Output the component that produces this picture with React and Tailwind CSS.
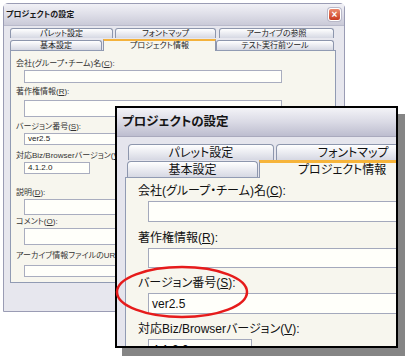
const jp = "font-['Liberation_Sans','Noto_Sans_CJK_JP',sans-serif] [font-feature-settings:'palt']"

function SmallTab({ children, className = '' }) {
  return (
    <div
      className={`flex items-center justify-center rounded-t-[3px] border border-b-0 border-[#8d96ad] bg-gradient-to-b from-white to-[#d6d8e3] text-[8px] leading-none text-[#222] ${className}`}
    >
      {children}
    </div>
  )
}

function BigTab({ children, className = '' }) {
  return (
    <div
      className={`flex shrink-0 items-center rounded-t-[4px] border border-b-0 border-[#8d96ad] bg-gradient-to-b from-white to-[#d6d8e3] text-[12px] leading-none text-[#111] ${className}`}
    >
      {children}
    </div>
  )
}

function Key({ k }) {
  return <span className="underline underline-offset-1">{k}</span>
}

const smallFields = [
  { label: '会社(グループ・チーム)名', k: 'C', lab: 'mt-[8px]', box: 'mt-[1px] h-[13px] w-[258px]' },
  { label: '著作権情報', k: 'R', lab: 'mt-[4px]', box: 'mt-[3px] h-[17px] w-[258px]' },
  { label: 'バージョン番号', k: 'S', lab: 'mt-[5px]', box: 'mt-[1px] h-[12px] w-[258px]', value: 'ver2.5' },
  { label: '対応Biz/Browserバージョン', k: 'V', lab: 'mt-[6px]', box: 'mt-[1px] h-[12px] w-[66px]', value: '4.1.2.0' },
  { label: '説明', k: 'D', lab: 'mt-[14px]', box: 'mt-[1px] h-[16px] w-[258px]' },
  { label: 'コメント', k: 'O', lab: 'mt-[2px]', box: 'mt-[1px] h-[17px] w-[258px]' },
  { label: 'アーカイブ情報ファイルのURL', k: 'U', lab: 'mt-[6px]', box: 'mt-[4px] h-[12px] w-[258px]' },
]

const bigFields = [
  { label: '会社(グループ・チーム)名', k: 'C', lab: 'mt-[6px]', box: 'mt-[3px] h-[21px] w-[300px]' },
  { label: '著作権情報', k: 'R', lab: 'mt-[9px]', box: 'mt-[3px] h-[20px] w-[300px]' },
  { label: 'バージョン番号', k: 'S', lab: 'mt-[8px]', box: 'mt-[3px] h-[21px] w-[300px]', value: 'ver2.5' },
  { label: '対応Biz/Browserバージョン', k: 'V', lab: 'mt-[8px]', box: 'mt-[3px] h-[21px] w-[104px]', value: '4.1.2.0' },
]

function SmallWindow() {
  return (
    <div className="ml-[3px] mt-[3px] flex h-[309px] w-[342px] flex-col rounded-t-[5px] border border-[#9a9cb4] bg-[#e7e7ee]">
      <div className="flex h-[22px] items-center justify-between border-b border-[#b9bacb] bg-gradient-to-b from-[#f1f1f6] via-[#dedee8] to-[#cacad8] pl-[2px] pr-[3px]">
        <span className="text-[8px] font-bold leading-none text-[#1a1a1a]">プロジェクトの設定</span>
        <div className="flex h-[13px] w-[13px] items-center justify-center rounded-[3px] border border-white bg-gradient-to-b from-[#ec8a6d] to-[#c8391f] text-[10px] font-bold leading-none text-white shadow-[0_0_0_1px_#b8b8c8]">
          ×
        </div>
      </div>
      <div className="flex flex-col pl-[6px] pt-[2px]">
        <div className="flex h-[10px] gap-[2px]">
          <SmallTab className="w-[103px]">パレット設定</SmallTab>
          <SmallTab className="w-[101px]">フォントマップ</SmallTab>
          <SmallTab className="ml-[1px] w-[115px]">アーカイブの参照</SmallTab>
        </div>
        <div className="mt-[1px] flex h-[11px] items-end">
          <SmallTab className="h-[10px] w-[92px]">基本設定</SmallTab>
          <div className="relative z-10 mb-[-1px] ml-[1px] flex h-[12px] w-[113px] items-start justify-center border-x border-t-2 border-x-[#8d96ad] border-t-[#f4b23c] bg-[#f7f6ee] pt-[1px] text-[8px] leading-none text-[#222]">
            プロジェクト情報
          </div>
          <SmallTab className="h-[10px] w-[118px]">テスト実行前ツール</SmallTab>
        </div>
        <div className="flex h-[233px] w-[326px] flex-col border border-[#919bb3] bg-[#f7f6ee] pl-[5px]">
          {smallFields.map((f) => (
            <div key={f.k} className="flex flex-col">
              <div className={`text-[8px] leading-[10px] text-[#333] ${f.lab}`}>
                {f.label}(<Key k={f.k} />):
              </div>
              <div
                className={`ml-[8px] flex items-center border border-[#a9adbf] bg-[#fffffa] pl-[3px] text-[8px] leading-none text-[#222] ${f.box}`}
              >
                {f.value}
              </div>
            </div>
          ))}
        </div>
      </div>
    </div>
  )
}

function BigWindow() {
  return (
    <div className="absolute left-[115px] top-[106px] flex h-[242px] w-[283px] flex-col overflow-hidden border-2 border-black bg-[#e5e5ed] shadow-[7px_8px_0_#858585]">
      <div className="flex h-[29px] shrink-0 items-center border-b border-[#a9a9bd] bg-gradient-to-b from-[#f3f3f7] via-[#dadae5] to-[#bdbdcf] pl-[5px]">
        <span className="text-[12.5px] font-bold leading-none text-[#151515]">プロジェクトの設定</span>
      </div>
      <div className="flex w-[360px] flex-col pl-[8px] pt-[7px]">
        <div className="flex h-[16px] gap-[2px] pl-[3px]">
          <BigTab className="w-[146px] justify-center">パレット設定</BigTab>
          <BigTab className="w-[200px] pl-[41px]">フォントマップ</BigTab>
        </div>
        <div className="flex h-[17px] items-end pl-[2px]">
          <BigTab className="h-[16px] w-[131px] justify-center">基本設定</BigTab>
          <div className="relative z-10 mb-[-1px] ml-[1px] flex h-[18px] w-[200px] shrink-0 items-start border-l border-t-[3px] border-l-[#8d96ad] border-t-[#f6b43a] bg-[#f7f6ee] pl-[38px] pt-[1px] text-[12px] leading-none text-[#111]">
            プロジェクト情報
          </div>
        </div>
        <div className="flex h-[200px] w-[320px] flex-col border border-[#919bb3] bg-[#f7f6ee] pl-[12px]">
          {bigFields.map((f) => (
            <div key={f.k} className="flex flex-col">
              <div className={`text-[12px] leading-[14px] text-[#111] ${f.lab}`}>
                {f.label}(<Key k={f.k} />):
              </div>
              <div
                className={`ml-[10px] flex shrink-0 items-center border border-[#a4a9bc] bg-[#fffffa] pl-[3px] text-[12px] leading-none text-[#111] ${f.box}`}
              >
                {f.value}
              </div>
            </div>
          ))}
        </div>
      </div>
    </div>
  )
}

export default function App() {
  return (
    <div className={`relative h-[360px] w-[409px] overflow-hidden bg-white ${jp}`}>
      <SmallWindow />
      <BigWindow />
      <svg className="absolute left-[114px] top-[264px]" width="136" height="56" viewBox="0 0 136 56">
        <ellipse cx="68" cy="28" rx="65" ry="25" fill="none" stroke="#e61b1b" strokeWidth="2.5" />
      </svg>
    </div>
  )
}
